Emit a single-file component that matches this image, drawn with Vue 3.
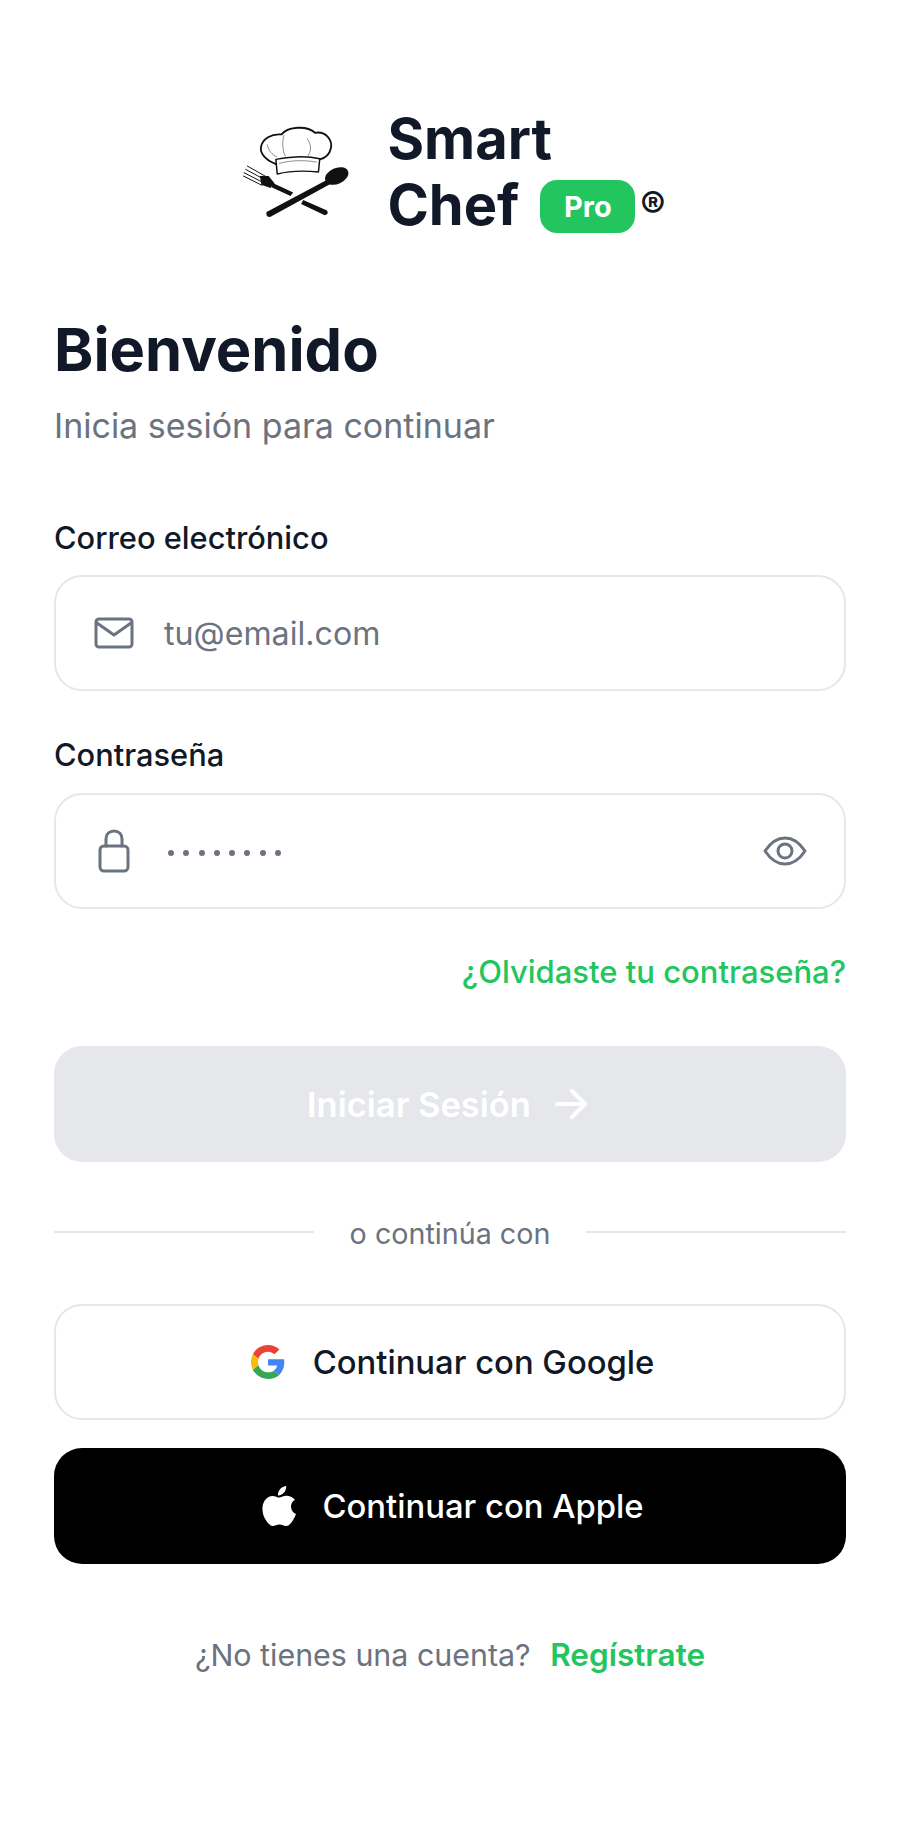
<template>
  <div class="login">
    <header class="brand">
      <svg class="brand-icon" viewBox="60 100 340 300" width="113" height="100" aria-hidden="true">
        <g fill="none" stroke="#111" stroke-linecap="round" stroke-linejoin="round">
          <path stroke-width="5.500" d="M168 226C140 216 120 196 123 176C127 150 155 134 185 137C205 112 262 110 286 132C318 126 340 154 333 180C329 198 316 208 300 212" />
          <path stroke-width="4.500" d="M168 212L172 256C212 246 258 246 296 250L300 210C258 200 210 204 168 212Z" />
          <path stroke-width="2" stroke="#555" d="M178 224C215 214 255 214 290 220M142 168C146 186 156 198 170 204M192 140C186 160 188 186 196 202M262 150C276 166 276 190 262 204" />
        </g>
        <path fill="none" stroke="#111" stroke-width="3" stroke-linecap="round" d="M82 232L142 266M77 242L136 274M72 252L130 282M70 262L126 290" />
        <g fill="#111">
          <path d="M120 262L146 262L164 284L152 298L124 288Z" />
          <path d="M160 284L155 296L212 322L220 312Z" />
          <path d="M250 334L244 346L315 380Q328 378 322 366Z" />
          <path d="M328 270L336 284L152 385Q136 386 140 370Z" />
        </g>
        <ellipse cx="351" cy="262" rx="37" ry="24" transform="rotate(-24 351 262)" fill="#111" />
      </svg>
      <div class="brand-name">
        <span>Smart</span>
        <span class="brand-line">
          Chef
          <span class="pro">Pro</span>
          <span class="reg">®</span>
        </span>
      </div>
    </header>

    <h1>Bienvenido</h1>
    <p class="subtitle">Inicia sesión para continuar</p>

    <label class="field-label">Correo electrónico</label>
    <div class="field">
      <svg class="field-icon" viewBox="0 0 40 32" width="40" height="32" aria-hidden="true">
        <rect x="2" y="2" width="36" height="28" rx="3" />
        <path d="M3 6L20 18L37 6" />
      </svg>
      <span class="placeholder">tu@email.com</span>
    </div>

    <label class="field-label second">Contraseña</label>
    <div class="field">
      <svg class="field-icon" viewBox="0 0 40 44" width="40" height="44" aria-hidden="true">
        <rect x="6" y="17" width="28" height="25" rx="4" />
        <path d="M12 17V10C12 5 15.500 2 20 2C24.500 2 28 5 28 10V17" />
      </svg>
      <span class="dots">
        <i v-for="n in 8" :key="n"></i>
      </span>
      <svg class="eye" viewBox="0 0 44 30" width="44" height="30" aria-hidden="true">
        <path d="M2 15C8 6 14 2 22 2C30 2 36 6 42 15C36 24 30 28 22 28C14 28 8 24 2 15Z" />
        <circle cx="22" cy="15" r="7" />
      </svg>
    </div>

    <a class="forgot">¿Olvidaste tu contraseña?</a>

    <button class="btn btn-submit" type="button">
      Iniciar Sesión
      <svg viewBox="0 0 32 32" width="32" height="32" aria-hidden="true">
        <path d="M2 16H29M17 3L30 16L17 29" />
      </svg>
    </button>

    <div class="divider"><span>o continúa con</span></div>

    <button class="btn btn-google" type="button">
      <svg viewBox="0 0 48 48" width="34" height="34" aria-hidden="true">
        <path fill="#EA4335" d="M24 9.500c3.500 0 6.700 1.200 9.200 3.600l6.900-6.900C35.900 2.400 30.400 0 24 0 14.600 0 6.500 5.400 2.600 13.200l8 6.200C12.400 13.700 17.700 9.500 24 9.500z" />
        <path fill="#4285F4" d="M47 24.500c0-1.600-.1-3.100-.4-4.500H24v9h12.900c-.6 3-2.200 5.500-4.700 7.200l7.700 6c4.500-4.200 7.100-10.300 7.100-17.700z" />
        <path fill="#FBBC05" d="M10.600 28.600c-.5-1.400-.8-3-.8-4.600s.3-3.200.8-4.600l-8-6.200C.9 16.500 0 20.100 0 24s.9 7.500 2.600 10.800l8-6.200z" />
        <path fill="#34A853" d="M24 48c6.500 0 11.900-2.100 15.900-5.800l-7.700-6c-2.200 1.400-4.900 2.300-8.200 2.300-6.300 0-11.600-4.200-13.400-10l-8 6.300C6.500 42.600 14.600 48 24 48z" />
      </svg>
      Continuar con Google
    </button>

    <button class="btn btn-apple" type="button">
      <svg viewBox="0 0 34 40" width="34" height="40" aria-hidden="true">
        <path fill="#fff" d="M24.200 0c.2 2.700-.8 4.900-2.200 6.500-1.500 1.800-3.800 3.100-6 2.900-.3-2.500.9-4.900 2.200-6.400C19.700 1.300 22.300.1 24.200 0zM33 13.800c-2.700 1.700-4.100 4-4 7 .1 3.500 2.200 6.100 5 7.300-.8 2.300-1.800 4.500-3.200 6.500-1.800 2.700-3.700 5.300-6.500 5.400-2.700.1-3.600-1.600-6.800-1.600-3.100 0-4.200 1.500-6.700 1.600-2.700.1-4.900-2.800-6.700-5.400C.4 29.300-1.200 20.400 2.700 14.500c1.800-2.800 4.800-4.500 7.900-4.600 2.600 0 5 1.700 6.600 1.700 1.500 0 4.200-2 7.300-1.800 2.800.1 6.100 1.300 8.500 4z" />
      </svg>
      Continuar con Apple
    </button>

    <p class="signup">¿No tienes una cuenta? <a>Regístrate</a></p>
  </div>
</template>

<script setup>
</script>

<style>
body {
  background: #fff;
}
</style>

<style scoped>
.login {
  box-sizing: border-box;
  width: 900px;
  height: 1825px;
  padding: 107px 54px 0;
  display: flex;
  flex-direction: column;
  font-family: Inter, "Noto Sans", sans-serif;
  color: #111827;
  background: #fff;
}

.brand {
  display: flex;
  align-items: center;
  justify-content: center;
  gap: 34px;
  padding-left: 6px;
  height: 130px;
}

.brand-name {
  display: flex;
  flex-direction: column;
  font-size: 56px;
  font-weight: 700;
  line-height: 66px;
}

.brand-line {
  display: flex;
  align-items: center;
}

.pro {
  margin: 2px 0 0 21px;
  width: 95px;
  height: 53px;
  border-radius: 17px;
  background: #22c55e;
  color: #fff;
  font-size: 29px;
  line-height: 53px;
  text-align: center;
}

.reg {
  margin-left: 5px;
  font-size: 38px;
  line-height: 1;
}

h1 {
  margin: 77px 0 0;
  font-size: 59.600px;
  font-weight: 700;
  line-height: 70px;
}

.subtitle {
  margin: 20px 0 0;
  font-size: 34px;
  line-height: 44px;
  color: #6b7280;
}

.field-label {
  margin-top: 70px;
  font-size: 30.800px;
  font-weight: 450;
  line-height: 40px;
}

.field-label.second {
  margin-top: 44px;
}

.field {
  box-sizing: border-box;
  display: flex;
  align-items: center;
  gap: 30px;
  height: 116px;
  margin-top: 17px;
  padding: 0 38px;
  border: 2px solid #e5e7eb;
  border-radius: 28px;
}

.field-label.second + .field {
  margin-top: 18px;
}

.field-icon,
.eye {
  flex: none;
  fill: none;
  stroke: #6b7280;
  stroke-width: 3;
  stroke-linecap: round;
  stroke-linejoin: round;
}

.placeholder {
  font-size: 32.200px;
  color: #6b7280;
}

.dots {
  display: flex;
  gap: 9.300px;
  margin: 4px 0 0 4px;
}

.dots i {
  width: 6px;
  height: 6px;
  border-radius: 50%;
  background: #6b7280;
}

.eye {
  margin: 0 -1px 0 auto;
}

.forgot {
  align-self: flex-end;
  margin-top: 43px;
  font-size: 31px;
  font-weight: 450;
  line-height: 40px;
  color: #22c55e;
}

.btn {
  box-sizing: border-box;
  display: flex;
  align-items: center;
  justify-content: center;
  width: 100%;
  height: 116px;
  padding: 0;
  border: none;
  border-radius: 28px;
  font-family: inherit;
  font-size: 32.800px;
  font-weight: 450;
}

.btn-submit {
  gap: 24px;
  margin-top: 54px;
  padding-right: 6px;
  background: #e5e7eb;
  color: #fff;
  font-size: 34.500px;
  font-weight: 600;
}

.btn-submit svg {
  fill: none;
  stroke: #fff;
  stroke-width: 4;
  stroke-linecap: round;
  stroke-linejoin: round;
}

.divider {
  display: flex;
  align-items: center;
  gap: 36px;
  margin-top: 50px;
  font-size: 28.700px;
  line-height: 37px;
  color: #6b7280;
}

.divider span {
  padding-top: 3px;
}

.divider::before,
.divider::after {
  content: "";
  flex: 1;
  height: 2px;
  background: #e5e7eb;
}

.btn-google {
  gap: 28px;
  margin-top: 52px;
  padding-left: 5px;
  background: #fff;
  border: 2px solid #e5e7eb;
  color: #111827;
}

.btn-apple {
  gap: 26px;
  margin-top: 28px;
  padding-left: 6px;
  background: #000;
  color: #fff;
}

.signup {
  margin: 71px 0 0;
  font-size: 30.400px;
  line-height: 40px;
  text-align: center;
  color: #6b7280;
}

.signup a {
  margin-left: 11px;
  font-size: 31.500px;
  font-weight: 600;
  color: #22c55e;
}
</style>
